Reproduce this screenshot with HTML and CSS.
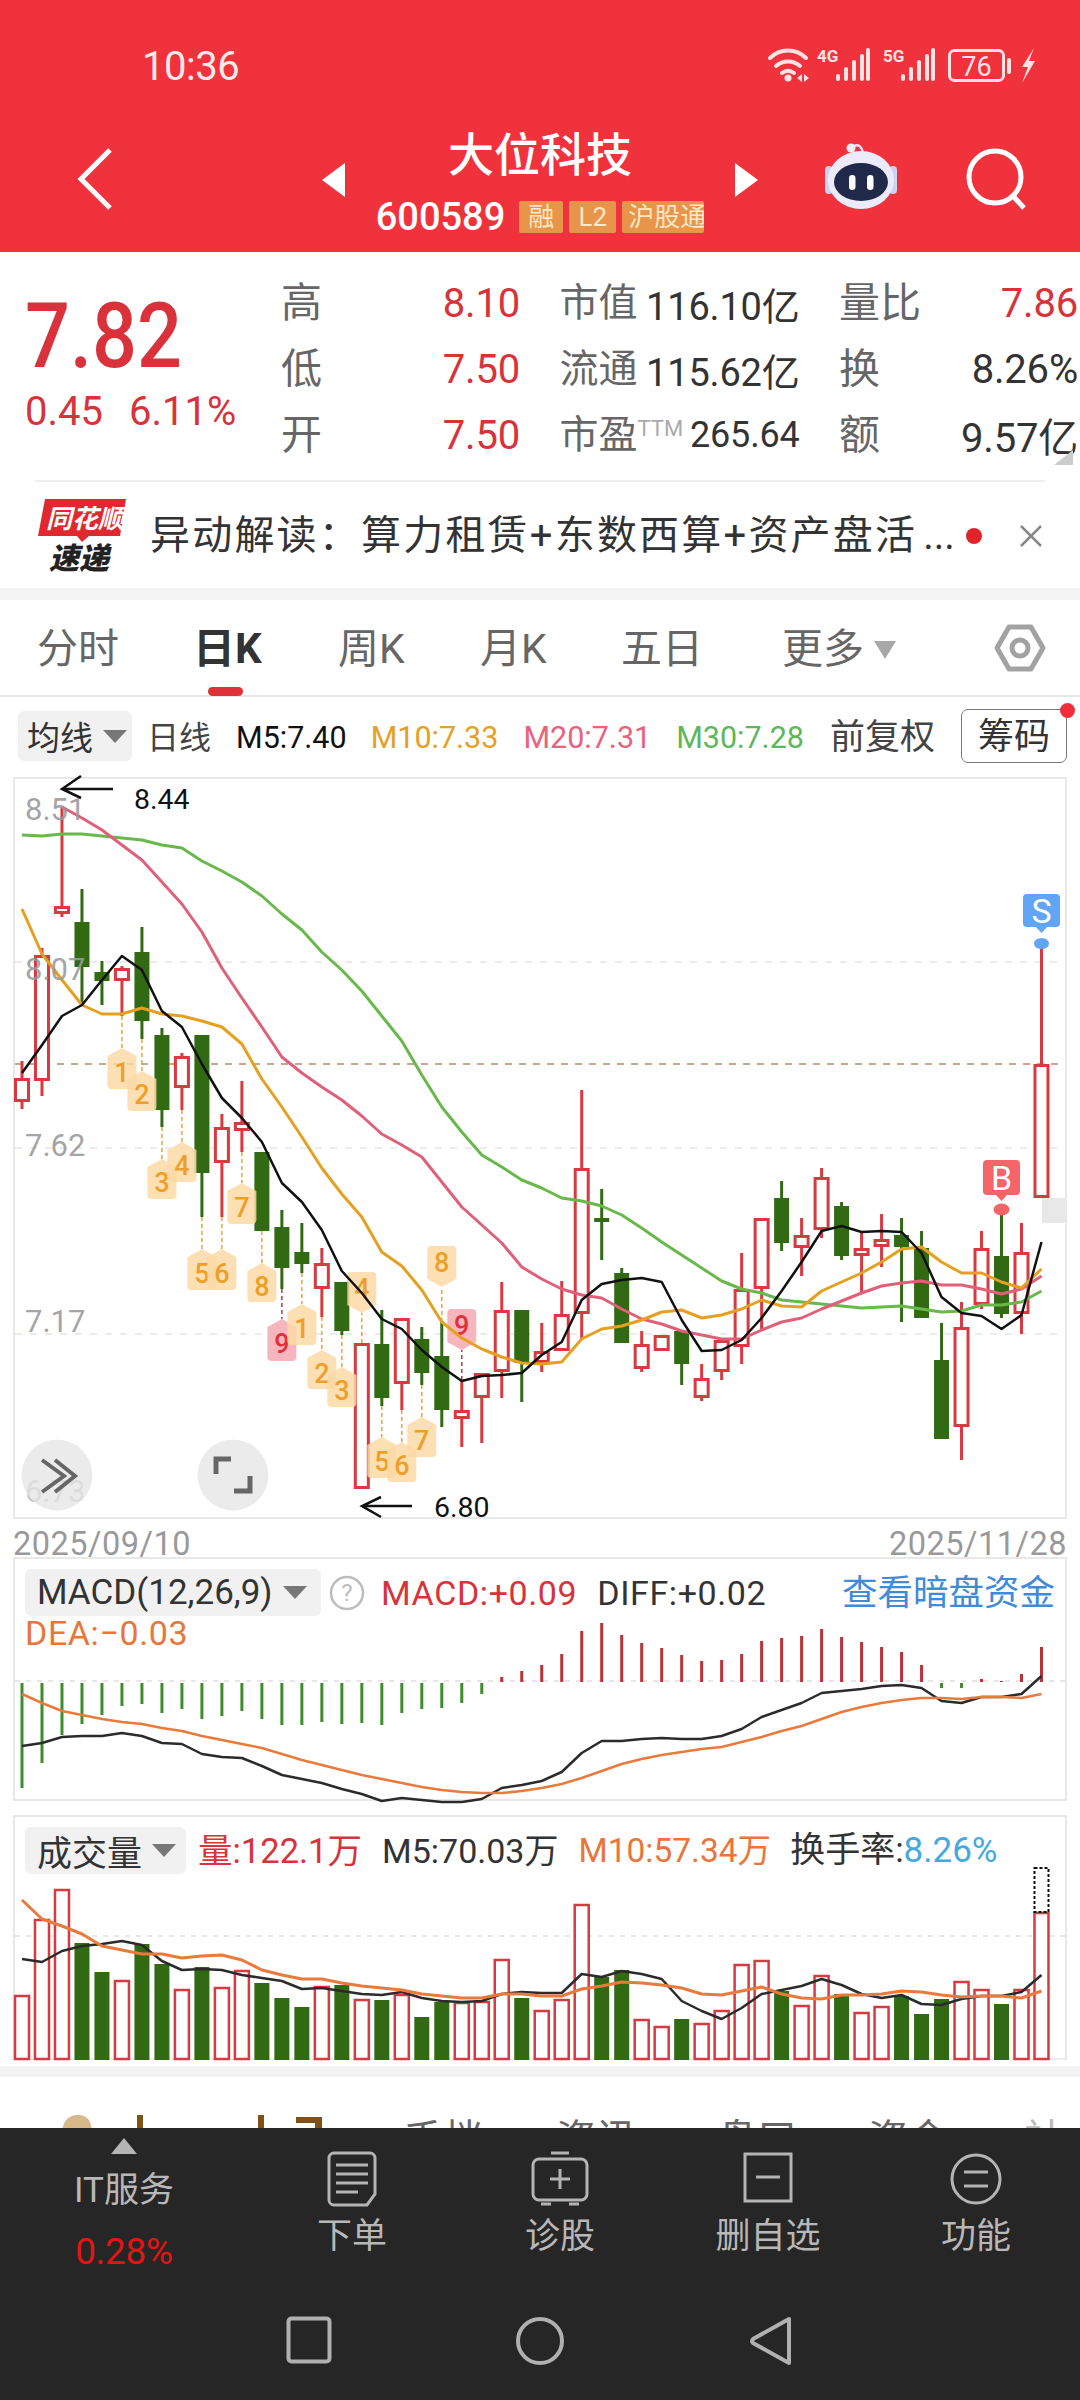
FILE: index.html
```html
<!DOCTYPE html>
<html lang="zh-CN">
<head>
<meta charset="utf-8">
<title>大位科技 600589</title>
<link rel="stylesheet" href="styles.css">
</head>
<body>
<div class="page">
  <header class="hero">
    <div class="status">
      <span class="clock">10:36</span>
      <svg class="status-icons" width="290" height="50" viewBox="760 40 290 50">
        <g fill="none" stroke="#ffe3e3" stroke-width="4" stroke-linecap="round">
          <path d="M770 58c10-10 26-10 36 0"/><path d="M776 66c7-6 17-6 24 0"/><path d="M782 73c4-3 8-3 12 0"/>
        </g>
        <circle cx="788" cy="78" r="3.5" fill="#ffe3e3"/>
        <path d="M802 74l-5 4 5 4zM804 74l5 4-5 4z" fill="#ffe3e3"/>
        <text x="817" y="62" class="st-net">4G</text>
        <g fill="#ffe3e3"><rect x="836" y="74" width="4" height="7" rx="2"/><rect x="844" y="67" width="4" height="14" rx="2"/><rect x="852" y="60" width="4" height="21" rx="2"/><rect x="860" y="54" width="4" height="27" rx="2"/><rect x="866" y="48" width="4" height="33" rx="2"/></g>
        <text x="883" y="62" class="st-net">5G</text>
        <g fill="#ffe3e3"><rect x="901" y="74" width="4" height="7" rx="2"/><rect x="909" y="67" width="4" height="14" rx="2"/><rect x="917" y="60" width="4" height="21" rx="2"/><rect x="925" y="54" width="4" height="27" rx="2"/><rect x="931" y="48" width="4" height="33" rx="2"/></g>
        <rect x="949.5" y="50.500" width="54" height="30" rx="5" fill="none" stroke="#ffe3e3" stroke-width="3"/>
        <rect x="1007" y="58" width="4" height="16" rx="2" fill="#ffe3e3"/>
        <text x="976.500" y="76" class="st-batt">76</text>
        <path d="M1034 48l-12 19h6l-6 16 13-22h-6z" fill="#ffe3e3"/>
      </svg>
    </div>
    <div class="topbar">
      <div class="back-cell">
        <svg width="36" height="64" viewBox="0 0 36 64"><path d="M33 3L4 32l29 29" fill="none" stroke="#fff" stroke-width="5"/></svg>
      </div>
      <div class="stock-cell">
        <svg class="tri" width="23" height="34" viewBox="0 0 23 34"><path d="M23 0L0 17l23 17z" fill="#fff"/></svg>
        <div class="stock">
          <div class="stock-name">大位科技</div>
          <div class="stock-meta">
            <span class="stock-code">600589</span>
            <span class="tag tag-a">融</span>
            <span class="tag tag-b">L2</span>
            <span class="tag tag-c">沪股通</span>
          </div>
        </div>
        <svg class="tri" width="23" height="34" viewBox="0 0 23 34"><path d="M0 0l23 17L0 34z" fill="#fff"/></svg>
      </div>
      <div class="action-cell">
        <svg width="72" height="70" viewBox="0 0 72 70">
          <path d="M27 7c6-4 10-1 11 7" fill="none" stroke="#e8e4f8" stroke-width="2.500"/>
          <circle cx="26" cy="8" r="4.500" fill="#f0edfb"/>
          <rect x="0" y="26" width="8" height="28" rx="4" fill="#cfd2f2"/>
          <rect x="64" y="26" width="8" height="28" rx="4" fill="#cfd2f2"/>
          <ellipse cx="36" cy="40" rx="33" ry="29" fill="#ecebfa"/>
          <ellipse cx="36" cy="42" rx="27" ry="19" fill="#20294a"/>
          <rect x="24" y="35" width="6.500" height="15" rx="3.200" fill="#fff"/>
          <rect x="42" y="35" width="6.500" height="15" rx="3.200" fill="#fff"/>
        </svg>
        <svg width="62" height="64" viewBox="0 0 62 64">
          <circle cx="29" cy="29" r="26" fill="none" stroke="#fff" stroke-width="5"/>
          <path d="M47 48l11 12" stroke="#fff" stroke-width="5" fill="none"/>
        </svg>
      </div>
    </div>
  </header>

  <section class="quote">
    <div class="price-box">
      <div class="price">7.82</div>
      <div class="change"><span>0.45</span><span>6.11%</span></div>
    </div>
    <div class="stat-grid">
      <div class="stat"><span class="lbl">高</span><span class="val up">8.10</span></div>
      <div class="stat"><span class="lbl">市值</span><span class="val val-mid">116.10亿</span></div>
      <div class="stat"><span class="lbl">量比</span><span class="val up">7.86</span></div>
      <div class="stat"><span class="lbl">低</span><span class="val up">7.50</span></div>
      <div class="stat"><span class="lbl">流通</span><span class="val val-mid">115.62亿</span></div>
      <div class="stat"><span class="lbl">换</span><span class="val">8.26%</span></div>
      <div class="stat"><span class="lbl">开</span><span class="val up">7.50</span></div>
      <div class="stat"><span class="lbl">市盈<sup class="ttm">TTM</sup></span><span class="val val-sm">265.64</span></div>
      <div class="stat"><span class="lbl">额</span><span class="val">9.57亿</span></div>
    </div>
    <span class="corner"></span>
  </section>

  <section class="news">
    <svg class="news-logo" width="88" height="76" viewBox="37 497 88 76">
      <path d="M44 498h81l-6 37H88l-7 6-5-6H37z" fill="#e0282e"/>
      <text x="45" y="527" class="logo-top">同花顺</text>
      <text x="48" y="568" class="logo-bot">速递</text>
    </svg>
    <p class="news-text">异动解读：算力租赁+东数西算+资产盘活<span class="dots">...</span></p>
    <span class="news-dot"></span>
    <svg class="news-x" width="24" height="24" viewBox="0 0 24 24"><path d="M2 2l20 20M22 2L2 22" stroke="#888" stroke-width="2.500" fill="none"/></svg>
  </section>
  <div class="band band-top"></div>

  <nav class="tabs">
    <span class="tab">分时</span>
    <span class="tab tab-on">日K</span>
    <span class="tab">周K</span>
    <span class="tab">月K</span>
    <span class="tab">五日</span>
    <span class="tab">更多<i class="caret caret-lg"></i></span>
    <svg class="tab-gear" width="52" height="48" viewBox="0 0 52 48">
      <path d="M15 3h22l12 21-12 21H15L3 24z" fill="none" stroke="#a2a2a2" stroke-width="5" stroke-linejoin="round"/>
      <circle cx="26" cy="24" r="8" fill="none" stroke="#a2a2a2" stroke-width="5"/>
    </svg>
  </nav>

  <div class="legend">
    <span class="pill pill-ma">均线<i class="caret"></i></span>
    <span class="lg lg-day">日线</span>
    <span class="lg lg-m5">M5:7.40</span>
    <span class="lg lg-m10">M10:7.33</span>
    <span class="lg lg-m20">M20:7.31</span>
    <span class="lg lg-m30">M30:7.28</span>
    <span class="lg lg-fq">前复权</span>
    <span class="chip">筹码<i class="chip-dot"></i></span>
  </div>

  <div class="frame frame-main">
    <svg id="kline" class="plot" width="1050" height="738" viewBox="15 779 1050 738"></svg>
  </div>
  <div class="dates"><span>2025/09/10</span><span>2025/11/28</span></div>

  <section class="frame frame-macd">
    <div class="head-row">
      <span class="pill pill-macd">MACD(12,26,9)<i class="caret"></i></span>
      <svg class="help" width="36" height="36" viewBox="0 0 36 36">
        <circle cx="18" cy="18" r="16" fill="none" stroke="#bdbdbd" stroke-width="2.500"/>
        <text x="18" y="26" class="help-q">?</text>
      </svg>
      <span class="mt mt-macd">MACD:+0.09</span>
      <span class="mt mt-diff">DIFF:+0.02</span>
      <span class="mt-link">查看暗盘资金</span>
    </div>
    <div class="mt mt-dea">DEA:−0.03</div>
    <svg id="macd" class="plot" width="1050" height="153" viewBox="15 1646 1050 153"></svg>
  </section>

  <section class="frame frame-vol">
    <div class="head-row">
      <span class="pill pill-vol">成交量<i class="caret"></i></span>
      <span class="mt vt-q">量:122.1万</span>
      <span class="mt vt-m5">M5:70.03万</span>
      <span class="mt vt-m10">M10:57.34万</span>
      <span class="mt vt-rate">换手率:<b class="vt-pct">8.26%</b></span>
    </div>
    <svg id="vol" class="plot" width="1050" height="186" viewBox="15 1874 1050 186"></svg>
  </section>
  <div class="band band-mid"></div>

  <div class="subtabs">
    <svg class="subtabs-mark" width="280" height="20" viewBox="0 0 280 20">
      <path d="M0 20c0-14 6-20 16-20s14 6 14 20z" fill="#d8b98c"/>
      <rect x="75" y="0" width="6" height="20" fill="#7e5216"/>
      <rect x="196" y="0" width="6" height="20" fill="#7e5216"/>
      <path d="M234 2h26v18h-7V8h-19z" fill="#7e5216"/>
    </svg>
    <span class="subtab">千档</span>
    <span class="subtab">资讯</span>
    <span class="subtab">盘口</span>
    <span class="subtab">资金</span>
    <span class="subtab subtab-dim">社</span>
  </div>

  <footer class="dock">
    <div class="dock-row">
      <div class="dock-sector">
        <svg width="26" height="16" viewBox="0 0 26 16"><path d="M13 0l13 16H0z" fill="#b4b4b4"/></svg>
        <span class="sector-name">IT服务</span>
        <span class="sector-pct">0.28%</span>
      </div>
      <div class="dock-item">
        <svg width="50" height="56" viewBox="0 0 50 56"><path d="M7 2h36a5 5 0 0 1 5 5v36l-8 11H7a5 5 0 0 1-5-5V7a5 5 0 0 1 5-5z" fill="none" stroke="#b4b4b4" stroke-width="3"/><path d="M9 14h32M9 23h32M9 32h32M9 41h22" stroke="#b4b4b4" stroke-width="3"/></svg>
        <span>下单</span>
      </div>
      <div class="dock-item">
        <svg width="58" height="56" viewBox="0 0 58 56"><path d="M20 2h18" stroke="#b4b4b4" stroke-width="3"/><rect x="2" y="8" width="54" height="41" rx="6" fill="none" stroke="#b4b4b4" stroke-width="3"/><path d="M29 18v20M19 28h20M10 53h10M38 53h10" stroke="#b4b4b4" stroke-width="3"/></svg>
        <span>诊股</span>
      </div>
      <div class="dock-item">
        <svg width="50" height="56" viewBox="0 0 50 56"><rect x="2" y="3" width="46" height="47" fill="none" stroke="#b4b4b4" stroke-width="3"/><path d="M13 26h24" stroke="#b4b4b4" stroke-width="3"/></svg>
        <span>删自选</span>
      </div>
      <div class="dock-item">
        <svg width="52" height="56" viewBox="0 0 52 56"><circle cx="26" cy="28" r="24" fill="none" stroke="#b4b4b4" stroke-width="3"/><path d="M14 21h24M14 35h24" stroke="#b4b4b4" stroke-width="3"/></svg>
        <span>功能</span>
      </div>
    </div>
    <div class="navkeys">
      <svg width="46" height="48" viewBox="0 0 46 48"><rect x="2.500" y="2.500" width="41" height="43" rx="3" fill="none" stroke="#b0b0b0" stroke-width="4"/></svg>
      <svg width="48" height="50" viewBox="0 0 48 50"><circle cx="24" cy="25" r="22" fill="none" stroke="#b0b0b0" stroke-width="4"/></svg>
      <svg width="44" height="50" viewBox="0 0 44 50"><path d="M40 3v44L4 27a3 3 0 0 1 0-4z" fill="none" stroke="#b0b0b0" stroke-width="4" stroke-linejoin="round"/></svg>
    </div>
  </footer>
</div>
<script src="chart.js"></script>
</body>
</html>
```
FILE: styles.css
```css
* { box-sizing: border-box; }
html, body { margin: 0; padding: 0; background: #fff; }
body { font-family: Roboto, "Noto Sans CJK SC", sans-serif; color: #333; }
.page { position: relative; width: 1080px; height: 2400px; overflow: hidden; background: #fff; }
i, b { font-style: normal; font-weight: inherit; }

/* header */
.hero { height: 252px; background: #ef323b; color: #fff; }
.status { height: 120px; display: flex; justify-content: space-between; padding: 40px 30px 0 142px; }
.clock { font-size: 40px; line-height: 54px; letter-spacing: -.5px; color: #fbeaea; }
.status-icons { display: block; }
.st-net { font: 700 17px Roboto, sans-serif; fill: #ffe3e3; }
.st-batt { font: 400 27px Roboto, sans-serif; fill: #ffe3e3; text-anchor: middle; }
.topbar { display: grid; grid-template-columns: 322px 436px 322px; height: 132px; }
.back-cell { padding: 27px 0 0 77px; }
.stock-cell { display: flex; justify-content: space-between; align-items: flex-start; padding-top: 43px; }
.stock { text-align: center; margin-top: -39px; }
.stock-name { font-size: 46px; line-height: 62px; font-weight: 500; }
.stock-meta { display: flex; align-items: center; gap: 6px; margin-top: 15px; }
.stock-code { font-size: 38px; line-height: 32px; font-weight: 500; margin-right: 8px; }
.tag { height: 32px; line-height: 32px; background: #e8944a; color: #ffe8c4; font-size: 26px; text-align: center; border-radius: 2px; overflow: hidden; white-space: nowrap; }
.tag-a { width: 44px; }
.tag-b { width: 47px; }
.tag-c { width: 82px; padding-left: 6px; text-align: left; }
.action-cell { display: flex; align-items: flex-start; gap: 69px; padding: 20px 0 0 67px; }
.action-cell svg:last-child { margin-top: 8px; }

/* quote */
.quote { position: relative; height: 228px; display: flex; }
.price-box { width: 281px; padding: 38px 0 0 25px; color: #d9323b; }
.price { font-size: 90px; line-height: 94px; font-weight: 500; transform: scaleX(.88); transform-origin: left center; }
.change { display: flex; gap: 26px; font-size: 40px; line-height: 44px; margin-top: 6px; letter-spacing: 0; }
.stat-grid { width: 797px; display: grid; grid-template-columns: 239px 240px 239px; column-gap: 39.500px; grid-auto-rows: 66px; padding-top: 18px; }
.stat { display: flex; justify-content: space-between; align-items: center; white-space: nowrap; }
.lbl { font-size: 41px; line-height: 50px; color: #666; }
.val { font-size: 40px; color: #333; letter-spacing: -.2px; }
.val.up { color: #d9323b; }
.val-mid { font-size: 38px; }
.val-sm { font-size: 36px; }
.ttm { font-size: 22px; color: #aaa; vertical-align: 12px; line-height: 0; }
.stat:nth-child(3n+2) .lbl { font-size: 39px; }
.corner { position: absolute; right: 7px; bottom: 15px; width: 0; height: 0; border-left: 19px solid transparent; border-bottom: 15px solid #ccc; }

/* news */
.news { position: relative; height: 108px; margin: 0 35px; border-top: 2px solid #eee; display: flex; align-items: flex-start; }
.news-logo { margin: 16px 0 0 3px; overflow: visible; }
.news-text { margin: 22px 0 0 24px; width: 816px; font-size: 40px; line-height: 64px; color: #333; white-space: nowrap; letter-spacing: 2.200px; }
.dots { letter-spacing: 0; margin-left: 6px; }
.logo-top { font: italic 700 26px "Noto Sans CJK SC", sans-serif; fill: #fff; }
.logo-bot { font: italic 900 30px "Noto Sans CJK SC", sans-serif; fill: #222; }
.news-dot { width: 16px; height: 16px; border-radius: 50%; background: #e1242c; margin: 46px 0 0 0; }
.news-x { margin: 42px 0 0 37px; }
.band { background: #f3f3f3; }
.band-top { height: 12px; }

/* tabs */
.tabs { position: relative; height: 97px; display: grid; grid-template-columns: 159px 142px 142px 141px 161px 1fr; padding: 24px 0 0 37px; border-bottom: 2px solid #e6e6e6; }
.tab { font-size: 41px; line-height: 50px; color: #666; white-space: nowrap; }
.tab-on { font-weight: 700; color: #333; position: relative; margin-left: -3px; font-size: 42px; }
.tab-on::after { content: ""; position: absolute; left: 15px; top: 63px; width: 35px; height: 9px; border-radius: 5px; background: #e0313a; }
.caret { display: inline-block; width: 0; height: 0; border-left: 12px solid transparent; border-right: 12px solid transparent; border-top: 13px solid #777; margin-left: 10px; vertical-align: 5px; }
.caret-lg { border-top-color: #a8a8a8; border-left-width: 11px; border-right-width: 11px; border-top-width: 18px; vertical-align: 4px; }
.tab-gear { position: absolute; left: 994px; top: 24px; }

/* legend */
.legend { position: relative; height: 80px; display: flex; align-items: flex-start; padding: 14px 0 0 18px; white-space: nowrap; }
.pill { display: inline-flex; align-items: center; background: #f1f1f1; border-radius: 6px; color: #333; }
.pill-ma { width: 114px; height: 50px; padding-left: 9px; font-size: 33px; }
.lg { font-size: 30.500px; line-height: 54px; }
.lg-day { margin-left: 15px; font-size: 32px; color: #444; }
.lg-m5 { margin-left: 25px; color: #111; }
.lg-m10 { margin-left: 24px; color: #e6a023; }
.lg-m20 { margin-left: 25px; color: #e8627e; }
.lg-m30 { margin-left: 25px; color: #5cb85a; }
.lg-fq { margin-left: 26px; font-size: 35px; color: #444; }
.chip { position: absolute; left: 961px; top: 12px; width: 106px; height: 54px; border: 1.500px solid #777; border-radius: 7px; font-size: 36px; line-height: 54px; text-align: center; color: #333; }
.chip-dot { position: absolute; right: -9px; top: -7px; width: 15px; height: 15px; border-radius: 50%; background: #ef2d3b; }

/* panels */
.frame { position: relative; margin-left: 13px; width: 1054px; border: 2px solid #e8e8e8; }
.plot { display: block; overflow: visible; }
.axis-label { font: 400 31px Roboto, sans-serif; fill: #999; fill-opacity: .9; }
.axis-faint { fill-opacity: .6; }
.note { font: 400 28.500px Roboto, sans-serif; fill: #111; }
.badge-num { font: 500 27px Roboto, sans-serif; text-anchor: middle; }
.mark { font: 400 34px Roboto, sans-serif; fill: #fff; text-anchor: middle; }
.frame-main { height: 742px; }
.dates { height: 38px; margin-left: 13px; width: 1054px; display: flex; justify-content: space-between; font-size: 32.500px; line-height: 50px; color: #999; letter-spacing: .5px; }
.frame-macd { height: 244px; margin-bottom: 14px; }
.head-row { position: relative; display: flex; align-items: center; padding: 10px 0 0 10px; white-space: nowrap; }
.pill-macd { width: 296px; height: 47px; padding-left: 12px; font-size: 35px; color: #333; }
.pill-macd .caret { margin-left: 10px; }
.help { margin-left: 8px; }
.help-q { font: 400 24px Roboto, sans-serif; fill: #bdbdbd; text-anchor: middle; }
.mt { font-size: 34px; line-height: 36px; }
.mt-macd { margin-left: 16px; color: #d6333b; letter-spacing: .6px; }
.mt-diff { margin-left: 20px; color: #333; letter-spacing: .6px; }
.mt-link { position: absolute; right: 10px; top: 10px; font-size: 35.500px; line-height: 48px; color: #3f8bd9; }
.mt-dea { margin: 2px 0 0 10px; height: 30px; line-height: 31px; color: #e8763a; letter-spacing: .6px; }
.frame-vol { height: 245px; border-bottom: none; margin-bottom: 6px; }
.pill-vol { width: 161px; height: 47px; padding-left: 12px; font-size: 35px; }
.vt-q { margin-left: 12px; color: #d6333b; font-size: 34.500px; }
.vt-m5 { margin-left: 20px; color: #333; }
.vt-m10 { margin-left: 20px; color: #e8763a; font-size: 33.500px; }
.vt-rate { margin-left: 19px; color: #333; font-size: 35px; }
.vt-pct { color: #45a8e0; }
.band-mid { height: 11px; }

/* cropped tabs behind dock */
.subtabs { position: relative; height: 51px; display: grid; grid-template-columns: 153px 161px 151px 156px 1fr; padding: 38px 0 0 403px; font-size: 40px; line-height: 50px; color: #666; white-space: nowrap; }
.subtabs-mark { position: absolute; left: 62px; top: 38px; }
.subtab-dim { color: #bbb; }

/* dock */
.dock { position: absolute; left: 0; bottom: 0; width: 1080px; height: 272px; background: #262626; color: #b8b8b8; }
.dock-row { display: grid; grid-template-columns: 248px repeat(4, 208px); height: 175px; }
.dock-sector { display: flex; flex-direction: column; align-items: center; padding-top: 10px; }
.sector-name { font-size: 35px; line-height: 44px; margin-top: 15px; }
.sector-pct { font-size: 37px; line-height: 44px; margin-top: 17px; color: #e01515; letter-spacing: -.3px; }
.dock-item { display: flex; flex-direction: column; align-items: center; padding-top: 23px; font-size: 35px; line-height: 44px; }
.dock-item svg { margin-bottom: 8px; }
.navkeys { display: grid; grid-template-columns: repeat(3, 231px); justify-content: center; justify-items: center; padding-top: 13px; }
```
FILE: chart.js
```js
(function () {
  var NS = 'http://www.w3.org/2000/svg';
  var RED = '#d83a41', GREEN = '#326a14';
  function X(i) { return 22 + 19.99 * i; }
  function el(parent, name, attrs, text) {
    var n = document.createElementNS(NS, name);
    for (var k in attrs) n.setAttribute(k, attrs[k]);
    if (text !== undefined) n.textContent = text;
    parent.appendChild(n);
    return n;
  }
  function hline(svg, y, stroke, dash, x2) {
    el(svg, 'line', { x1: 15, x2: x2 || 1065, y1: y, y2: y, stroke: stroke, 'stroke-width': 2, 'stroke-dasharray': dash });
  }
  function poly(svg, start, ys, stroke, w) {
    var pts = ys.map(function (y, k) { return X(start + k).toFixed(1) + ',' + y; }).join(' ');
    el(svg, 'polyline', { points: pts, fill: 'none', stroke: stroke, 'stroke-width': w || 3, 'stroke-linejoin': 'round' });
  }

  /* type, high, bodyTop, bodyBottom, low */
  var K = [
    ['r',1061,1078,1102,1109],['r',948,955,1081,1096],['r',807,906,914,917],['g',889,922,967,1005],
    ['g',961,972,981,1005],['r',966,968,981,1016],['g',927,952,1021,1039],['g',1028,1035,1110,1127],
    ['r',1053,1056,1088,1110],['g',1035,1035,1173,1217],['r',1114,1127,1163,1217],['r',1081,1122,1131,1152],
    ['g',1152,1152,1231,1231],['g',1210,1227,1268,1289],['g',1223,1252,1264,1273],['r',1248,1263,1289,1317],
    ['g',1282,1282,1331,1335],['r',1343,1343,1489,1489],['g',1310,1344,1398,1406],['r',1318,1318,1384,1410],
    ['g',1327,1339,1373,1385],['g',1322,1356,1410,1427],['r',1380,1410,1419,1447],['r',1373,1373,1398,1443],
    ['r',1282,1310,1372,1398],['g',1310,1310,1363,1402],['r',1323,1351,1363,1372],['r',1281,1314,1351,1351],
    ['r',1090,1168,1314,1339],['g',1189,1218,1222,1260],['g',1268,1273,1343,1343],['r',1331,1344,1369,1372],
    ['r',1335,1335,1351,1351],['g',1331,1331,1364,1385],['r',1364,1378,1398,1401],['r',1340,1340,1372,1380],
    ['r',1253,1289,1347,1364],['r',1218,1218,1289,1330],['g',1181,1198,1243,1251],['r',1218,1235,1248,1276],
    ['r',1168,1177,1230,1238],['g',1202,1206,1256,1260],['r',1233,1248,1256,1292],['r',1214,1239,1247,1267],
    ['g',1218,1235,1247,1322],['g',1231,1248,1318,1318],['g',1323,1360,1439,1439],['r',1302,1327,1427,1460],
    ['r',1231,1248,1305,1309],['g',1215,1256,1314,1318],['r',1223,1252,1314,1334],['r',947,1064,1198,1198]
  ];
  var MA5 = [1073,1045,1016,1005,980,956,970,1011,1027,1064,1098,1118,1142,1183,1202,1230,1271,1293,1319,1329,1350,1367,1381,1376,1375,1373,1355,1342,1300,1284,1280,1278,1282,1320,1351,1350,1340,1318,1291,1262,1231,1226,1232,1231,1232,1253,1297,1313,1316,1329,1315,1242];
  var MA10 = [909,954,980,1005,1014,1014,1008,1014,1016,1021,1027,1044,1079,1107,1137,1168,1194,1217,1252,1266,1290,1322,1338,1349,1357,1363,1364,1362,1339,1329,1326,1320,1312,1310,1318,1315,1309,1300,1306,1307,1291,1282,1273,1262,1249,1247,1262,1273,1273,1282,1288,1269];
  var MA20 = [807,818,830,845,860,882,904,932,968,998,1027,1057,1073,1087,1100,1116,1134,1145,1157,1182,1207,1225,1243,1267,1279,1289,1295,1298,1309,1319,1324,1331,1335,1339,1339,1330,1322,1318,1309,1301,1293,1286,1283,1281,1285,1285,1289,1294,1289,1276];
  var MA30 = [835,836,834,834,836,838,840,845,848,861,871,882,896,914,930,952,970,991,1016,1041,1075,1107,1132,1155,1167,1180,1188,1198,1201,1206,1215,1228,1242,1255,1268,1281,1289,1293,1300,1302,1304,1306,1308,1307,1306,1309,1312,1311,1305,1305,1302,1291];

  /* bar index, top, bottom, digit, red?, points down? */
  var BADGES = [
    [5,1048,1089,'1'],[6,1071,1111,'2'],[7,1159,1199,'3'],[8,1142,1182,'4'],[9,1249,1290,'5'],[10,1249,1290,'6'],
    [11,1183,1224,'7'],[12,1263,1302,'8'],[13,1319,1361,'9',1],[14,1304,1345,'1'],[15,1350,1389,'2'],[16,1367,1407,'3'],
    [17,1272,1313,'4',0,1],[18,1437,1478,'5'],[19,1442,1482,'6'],[20,1417,1457,'7'],[21,1246,1287,'8',0,1],[22,1309,1350,'9',1,1]
  ];

  function drawKline() {
    var s = document.getElementById('kline');
    [962, 1148, 1334].forEach(function (y) { hline(s, y, '#ececec', '7 8'); });
    hline(s, 1064, '#c9a78c', '7 7');
    el(s, 'rect', { x: 1042, y: 1198, width: 23, height: 25, fill: '#e8e8e8' });
    K.forEach(function (c, i) {
      var x = X(i), col = c[0] === 'r' ? RED : GREEN;
      el(s, 'path', { d: 'M' + x + ' ' + c[1] + 'V' + c[2] + 'M' + x + ' ' + c[3] + 'V' + c[4], stroke: col, 'stroke-width': 3, fill: 'none' });
      if (c[0] === 'r') {
        el(s, 'rect', { x: x - 6.5, y: c[2] + 1.5, width: 13, height: c[3] - c[2] - 3, fill: '#fff', stroke: col, 'stroke-width': 3 });
      } else {
        el(s, 'rect', { x: x - 7.5, y: c[2], width: 15, height: Math.max(c[3] - c[2], 3), fill: col });
      }
    });
    BADGES.forEach(function (b) {
      var i = b[0], x = X(i), t = b[1], e = b[2], red = b[4], down = b[5];
      var from = down ? K[i][1] : K[i][4], to = down ? e : t;
      el(s, 'line', { x1: x, x2: x, y1: from, y2: to, stroke: red ? '#b5384a' : '#eba23a', 'stroke-width': 1.5, 'stroke-dasharray': '4 3' });
    });
    BADGES.forEach(function (b) {
      var x = X(b[0]), t = b[1], e = b[2], red = b[4], down = b[5], w = 14.5, d;
      if (!down) {
        d = 'M' + x + ' ' + t + 'L' + (x + w) + ' ' + (t + 8) + 'V' + (e - 4) + 'q0 4-4 4H' + (x - w + 4) + 'q-4 0-4-4V' + (t + 8) + 'z';
      } else {
        d = 'M' + x + ' ' + e + 'L' + (x + w) + ' ' + (e - 8) + 'V' + (t + 4) + 'q0-4-4-4H' + (x - w + 4) + 'q-4 0-4 4V' + (e - 8) + 'z';
      }
      el(s, 'path', { d: d, fill: red ? '#f6a9b2' : '#fcd9a6', 'fill-opacity': .85 });
      el(s, 'text', { x: x, y: (t + e) / 2 + (down ? 5 : 13), class: 'badge-num', fill: red ? '#e0303c' : '#ee9f2a' }, b[3]);
    });
    poly(s, 0, MA30, '#68b84c');
    poly(s, 2, MA20, '#e0607a');
    poly(s, 0, MA10, '#e6a020');
    poly(s, 0, MA5, '#111', 2.5);

    [['8.51',820],['8.07',980],['7.62',1156],['7.17',1332]].forEach(function (l) {
      el(s, 'text', { x: 25, y: l[1], class: 'axis-label' }, l[0]);
    });

    /* annotations */
    el(s, 'path', { d: 'M113 789H63M81 776L62 789l19 9', stroke: '#111', 'stroke-width': 2.5, fill: 'none' });
    el(s, 'text', { x: 134, y: 809, class: 'note' }, '8.44');
    el(s, 'path', { d: 'M412 1506H363M381 1497l-19 9 19 11', stroke: '#111', 'stroke-width': 2.5, fill: 'none' });
    el(s, 'text', { x: 434, y: 1517, class: 'note' }, '6.80');

    /* floating buttons, over the lowest axis label */
    el(s, 'text', { x: 25, y: 1502, class: 'axis-label axis-faint' }, '6.73');
    [57, 233].forEach(function (cx) {
      el(s, 'circle', { cx: cx, cy: 1475, r: 35.5, fill: '#e4e4e4', 'fill-opacity': .75 });
    });
    el(s, 'path', { d: 'M42 1460L64 1476 42 1492M55 1460L75 1476 55 1492', stroke: '#666', 'stroke-width': 4, fill: 'none' });
    el(s, 'path', { d: 'M231 1459H216v15M234 1491h16v-15', stroke: '#666', 'stroke-width': 5, fill: 'none' });

    /* S / B markers */
    el(s, 'path', { d: 'M1027 894h29a4 4 0 0 1 4 4v25a4 4 0 0 1-4 4h-9l-5.500 6-5.500-6h-9a4 4 0 0 1-4-4v-25a4 4 0 0 1 4-4z', fill: '#62a4f5' });
    el(s, 'text', { x: 1041.5, y: 923, class: 'mark' }, 'S');
    el(s, 'ellipse', { cx: 1041.5, cy: 943.5, rx: 7.5, ry: 5.5, fill: '#62a4f5' });
    el(s, 'path', { d: 'M987 1160h29a4 4 0 0 1 4 4v27a4 4 0 0 1-4 4h-9l-5.500 6-5.500-6h-9a4 4 0 0 1-4-4v-27a4 4 0 0 1 4-4z', fill: '#f56468' });
    el(s, 'text', { x: 1001.5, y: 1190, class: 'mark' }, 'B');
    el(s, 'ellipse', { cx: 1001.5, cy: 1209.5, rx: 8, ry: 6, fill: '#f56468' });
  }

  /* macd histogram ends: the baseline is y=1680 */
  var HIST = [1786,1761,1733,1722,1713,1704,1702,1711,1707,1717,1714,1709,1717,1723,1723,1720,1722,1721,1723,1711,1707,1706,1701,1692,1675,1669,1663,1652,1629,1621,1633,1641,1646,1653,1659,1658,1652,1639,1636,1634,1627,1635,1640,1645,1650,1663,1686,1686,1677,1679,1672,1645];
  var DIFF = [1744,1741,1735,1734,1734,1731,1734,1741,1742,1752,1755,1756,1764,1773,1777,1781,1787,1792,1799,1796,1798,1800,1800,1797,1786,1783,1779,1770,1751,1739,1739,1737,1736,1737,1737,1734,1727,1715,1708,1701,1691,1689,1687,1684,1683,1686,1699,1701,1695,1695,1692,1674];
  var DEA = [1692,1701,1709,1713,1717,1720,1722,1726,1729,1734,1738,1742,1746,1752,1758,1763,1768,1773,1777,1781,1785,1788,1790,1791,1791,1789,1786,1782,1776,1769,1762,1757,1753,1750,1747,1745,1740,1735,1729,1724,1717,1710,1705,1701,1698,1696,1696,1697,1695,1695,1696,1692];

  function drawMacd() {
    var s = document.getElementById('macd');
    hline(s, 1679, '#e6e6e6', '5 6');
    HIST.forEach(function (y, i) {
      var x = X(i), neg = y > 1680;
      el(s, 'line', { x1: x, x2: x, y1: neg ? 1681 : 1680, y2: y, stroke: neg ? '#3f8c2c' : '#b83238', 'stroke-width': 3 });
    });
    poly(s, 0, DIFF, '#2b2b2b', 2.5);
    poly(s, 0, DEA, '#ea7a3c', 2.5);
  }

  /* turnover bars: colour per bar and bar tops */
  var VR = 'rrrggrggrgrrgggrgrgrggrrrg' + 'rrrggrrgrrrrgrrgrrgggrrgrr';
  var VT = [1995,1919,1889,1943,1972,1980,1944,1964,1989,1967,1987,1970,1983,1998,2007,1986,1985,1999,2000,1994,2017,2002,2002,2001,1959,1998,2010,1999,1904,1977,1970,2019,2026,2019,2023,2010,1964,1960,1991,2005,1975,1994,2012,2006,1996,2014,1999,1981,1989,2004,1989,1912];
  var V5 = [1959,1962,1951,1946,1944,1941,1945,1961,1970,1969,1970,1975,1978,1981,1989,1988,1991,1994,1995,1992,1998,2001,2002,2001,1994,1992,1993,1993,1974,1977,1971,1974,1979,2001,2011,2019,2008,1994,1990,1986,1979,1985,1994,1998,1995,2004,2005,1999,1996,1996,1992,1975];
  var V10 = [1900,1919,1926,1934,1946,1950,1954,1954,1958,1956,1955,1960,1970,1975,1979,1979,1983,1986,1988,1990,1994,1996,1998,1998,1994,1994,1996,1996,1989,1986,1982,1983,1985,1988,1994,1995,1991,1987,1994,1998,1999,1995,1995,1994,1991,1992,1995,1997,1996,1996,1998,1991];

  function drawVol() {
    var s = document.getElementById('vol');
    hline(s, 1936, '#e8e8e8', '5 6');
    hline(s, 2059, '#eee', 'none');
    VT.forEach(function (y, i) {
      var x = X(i);
      if (VR[i] === 'r') {
        el(s, 'rect', { x: x - 7, y: y + 1, width: 14, height: 2059 - y - 1, fill: '#fff', stroke: RED, 'stroke-width': 2.5 });
      } else {
        el(s, 'rect', { x: x - 7.5, y: y, width: 15, height: 2060 - y, fill: GREEN });
      }
    });
    el(s, 'rect', { x: 1034.5, y: 1868, width: 14, height: 44, fill: 'none', stroke: '#111', 'stroke-width': 2, 'stroke-dasharray': '3 2' });
    poly(s, 0, V5, '#2b2b2b', 2.5);
    poly(s, 0, V10, '#ea7a3c', 3);
  }

  drawKline();
  drawMacd();
  drawVol();
})();
```
